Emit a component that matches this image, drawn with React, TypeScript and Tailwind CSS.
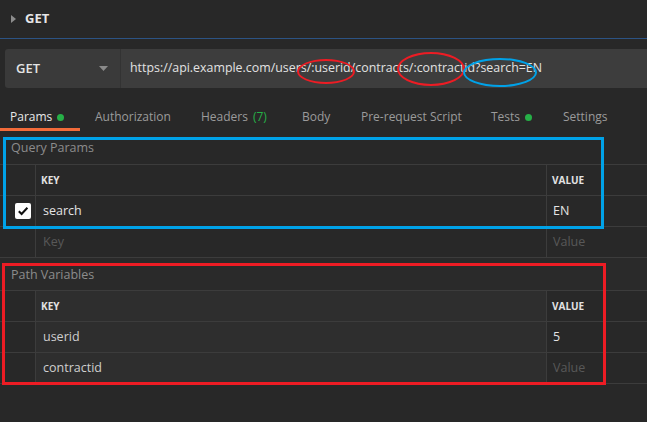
import React from "react";

const Dot = () => <span className="inline-block w-[7px] h-[7px] rounded-full bg-[#26b047] ml-[5px] mt-[1px]" />;

function Tabs() {
  return (
    <div className="flex h-[29px] mt-[14px] text-[12px] text-[#9b9b9b]">
      <div className="w-[80px] pl-[10px] pt-[3px] flex items-center border-b-[3px] border-[#f26b3a] text-[#e8e8e8]">
        Params
        <Dot />
      </div>
      <div className="w-[15px]" />
      <div className="w-[106px] flex items-center pt-[1px]">Authorization</div>
      <div className="w-[101px] flex items-center pt-[1px]">
        Headers<span className="ml-[5px] text-[#26b047]">(7)</span>
      </div>
      <div className="w-[59px] flex items-center pt-[1px]">Body</div>
      <div className="w-[130px] flex items-center pt-[1px]">Pre-request Script</div>
      <div className="w-[72px] flex items-center pt-[1px]">
        Tests
        <Dot />
      </div>
      <div className="flex items-center pt-[1px]">Settings</div>
    </div>
  );
}

function Check() {
  return (
    <span className="w-[16px] h-[16px] rounded-[2px] bg-white flex items-center justify-center">
      <svg width="12" height="12" viewBox="0 0 12 12">
        <path d="M1.8 6.2 L4.6 9 L10.4 2.8" fill="none" stroke="#111" strokeWidth="2" />
      </svg>
    </span>
  );
}

type Row = { key: React.ReactNode; value: React.ReactNode; check?: boolean };

function Table({ rows, lightKey }: { rows: Row[]; lightKey?: boolean }) {
  const keyBg = lightKey ? "bg-[#2e2e2e]" : "";
  return (
    <div className="border-b border-[#3c3c3c]">
      <div className="flex h-[31px] border-t border-[#3c3c3c]">
        <div className="w-[36px] border-r border-[#3c3c3c]" />
        <div className={`w-[511px] border-r border-[#3c3c3c] flex items-center pl-[5px] text-[10px] font-bold text-[#e2e2e2] ${keyBg}`}>
          KEY
        </div>
        <div className="flex-1 flex items-center pl-[5px] text-[10px] font-bold text-[#e2e2e2]">VALUE</div>
      </div>
      {rows.map((r, i) => (
        <div key={i} className="flex h-[31px] border-t border-[#3c3c3c] text-[12.5px]">
          <div className="w-[36px] border-r border-[#3c3c3c] flex items-center pl-[15px]">
            {r.check ? <Check /> : null}
          </div>
          <div className={`w-[511px] border-r border-[#3c3c3c] flex items-center pl-[7px] ${keyBg}`}>{r.key}</div>
          <div className="flex-1 flex items-center pl-[6px]">{r.value}</div>
        </div>
      ))}
    </div>
  );
}

export default function App() {
  const ph = (t: string) => <span className="text-[#585858]">{t}</span>;
  const tx = (t: string) => <span className="text-[#e4e4e4]">{t}</span>;
  const tx2 = (t: string) => <span className="text-[#cfcfcf]">{t}</span>;
  return (
    <div className="relative w-[647px] h-[422px] overflow-hidden bg-[#282828] font-['Open_Sans',sans-serif]">
      {/* top header */}
      <div className="h-[39px] border-b border-[#2c5384] flex items-center pl-[11px]">
        <svg width="5" height="8" viewBox="0 0 5 8" className="mr-[9px]">
          <path d="M0 0 L5 4 L0 8 Z" fill="#8c8c8c" />
        </svg>
        <span className="text-[13px] font-bold text-[#e6e6e6]">GET</span>
      </div>

      {/* URL bar */}
      <div className="flex h-[39px] mt-[10px] ml-[5px]">
        <div className="w-[115px] bg-[#3a3a3a] rounded-l-[3px] flex items-center pl-[11px] pr-[12px] justify-between">
          <span className="text-[13px] font-semibold text-[#e4e4e4]">GET</span>
          <svg width="9" height="5" viewBox="0 0 9 5">
            <path d="M0 0 L9 0 L4.5 5 Z" fill="#8a8a8a" />
          </svg>
        </div>
        <div className="flex-1 bg-[#3d3d3d] border-l border-[#333333] flex items-center pl-[9px] text-[12.4px] text-[#e2e2e2] whitespace-nowrap">
          https://api.example.com/users/:userid/contracts/:contractid?search=EN
        </div>
      </div>

      <Tabs />

      {/* Query Params */}
      <div className="mt-[6px]">
        <div className="h-[27px] flex items-center pl-[11px] pb-[4px] text-[12.5px] text-[#8c8c8c]">Query Params</div>
        <Table
          rows={[
            { key: tx("search"), value: tx("EN"), check: true },
            { key: ph("Key"), value: ph("Value") },
          ]}
        />
      </div>

      {/* Path Variables */}
      <div>
        <div className="h-[32px] flex items-center pl-[11px] pt-[3px] text-[12.5px] text-[#8c8c8c] bg-[#2a2a2a]">
          Path Variables
        </div>
        <Table
          lightKey
          rows={[
            { key: tx2("userid"), value: tx("5") },
            { key: tx2("contractid"), value: ph("Value") },
          ]}
        />
      </div>

      {/* annotations */}
      <div className="absolute left-[3px] top-[137px] w-[601px] h-[92px] border-[3px] border-[#00a2e8]" />
      <div className="absolute left-[2px] top-[263px] w-[604px] h-[122px] border-[3px] border-[#ed1c24]" />
      <div className="absolute left-[297px] top-[59px] w-[58px] h-[25px] rounded-[50%] border-[2px] border-[#ed1c24]" />
      <div className="absolute left-[397px] top-[52px] w-[68px] h-[34px] rounded-[50%] border-[2px] border-[#ed1c24]" />
      <div className="absolute left-[463px] top-[58px] w-[74px] h-[29px] rounded-[50%] border-[2px] border-[#00a2e8]" />
    </div>
  );
}
